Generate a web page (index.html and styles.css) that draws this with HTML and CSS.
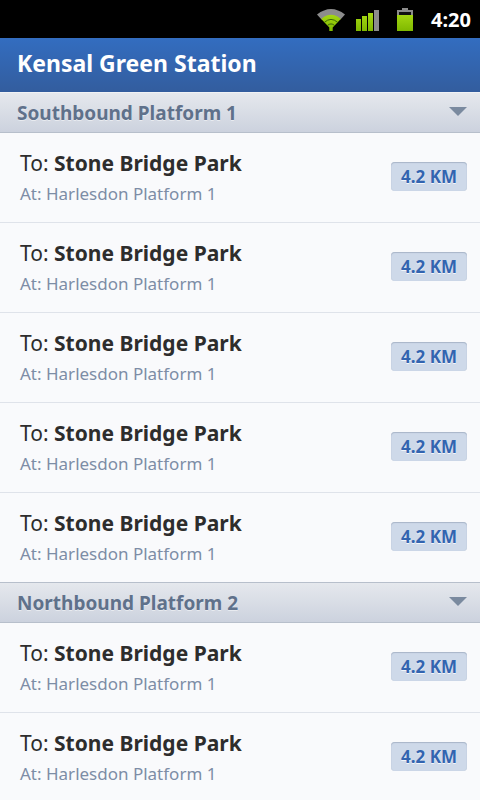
FILE: index.html
```html
<!DOCTYPE html>
<html lang="en">
<head>
<meta charset="utf-8">
<meta name="viewport" content="width=device-width, initial-scale=1">
<title>Kensal Green Station</title>
<link rel="stylesheet" href="styles.css">
</head>
<body>
<div class="status">
  <svg class="icon-wifi" width="30" height="24" viewBox="0 0 30 24" aria-hidden="true">
    <defs><linearGradient id="green" x1="0" y1="0" x2="0" y2="24" gradientUnits="userSpaceOnUse"><stop offset="0" stop-color="#b5e61a"/><stop offset="1" stop-color="#7fb800"/></linearGradient></defs>
    <path d="M1 7.500Q15-3.500 29 7.500L24.500 12.500Q15 4.500 5.500 12.500Z" fill="#8c8c8c"/>
    <path d="M5.200 12Q15 3.600 24.800 12L16.700 20.500V24H13.300V20.500Z" fill="url(#green)"/>
    <path d="M8.300 15.400Q15 9.400 21.700 15.400M11.300 18.600Q15 15.200 18.700 18.600" fill="none" stroke="#3c6408" stroke-width="1"/>
  </svg>
  <svg class="icon-signal" width="24" height="24" viewBox="0 0 24 24" aria-hidden="true">
    <path d="M0 12h5v12H0zM6 9h5v15H6zM12 6h5v18h-5z" fill="url(#green)"/>
    <path d="M18 3h5v21h-5z" fill="#8c8c8c"/>
  </svg>
  <svg class="icon-battery" width="16" height="24" viewBox="0 0 16 24" aria-hidden="true">
    <path d="M0 3h5V1h6v2h5v5H0z" fill="#8c8c8c"/>
    <path d="M2 5h12v3H2z" fill="#111"/>
    <path d="M0 8h16v16H0z" fill="url(#green)"/>
  </svg>
  <time class="clock">4:20</time>
</div>
<header class="title-bar"><h1>Kensal Green Station</h1></header>
<main class="board">
  <section>
    <h2><button class="platform" type="button">Southbound Platform 1<svg width="18" height="9" viewBox="0 0 18 9" aria-hidden="true"><path d="M0 0h18L9 9z" fill="#7a8a9f"/></svg></button></h2>
    <ul class="trains">
      <li><div><p class="to">To: <b>Stone Bridge Park</b></p><p class="at">At: Harlesdon Platform 1</p></div><span class="distance">4.2 KM</span></li>
      <li><div><p class="to">To: <b>Stone Bridge Park</b></p><p class="at">At: Harlesdon Platform 1</p></div><span class="distance">4.2 KM</span></li>
      <li><div><p class="to">To: <b>Stone Bridge Park</b></p><p class="at">At: Harlesdon Platform 1</p></div><span class="distance">4.2 KM</span></li>
      <li><div><p class="to">To: <b>Stone Bridge Park</b></p><p class="at">At: Harlesdon Platform 1</p></div><span class="distance">4.2 KM</span></li>
      <li><div><p class="to">To: <b>Stone Bridge Park</b></p><p class="at">At: Harlesdon Platform 1</p></div><span class="distance">4.2 KM</span></li>
    </ul>
  </section>
  <section>
    <h2><button class="platform" type="button">Northbound Platform 2<svg width="18" height="9" viewBox="0 0 18 9" aria-hidden="true"><path d="M0 0h18L9 9z" fill="#7a8a9f"/></svg></button></h2>
    <ul class="trains">
      <li><div><p class="to">To: <b>Stone Bridge Park</b></p><p class="at">At: Harlesdon Platform 1</p></div><span class="distance">4.2 KM</span></li>
      <li><div><p class="to">To: <b>Stone Bridge Park</b></p><p class="at">At: Harlesdon Platform 1</p></div><span class="distance">4.2 KM</span></li>
    </ul>
  </section>
</main>
</body>
</html>
```
FILE: styles.css
```css
* { box-sizing: border-box; }

body {
  margin: 0;
  height: 100vh;
  display: flex;
  flex-direction: column;
  background: #f9fafc;
  font-family: "Noto Sans", "Open Sans", sans-serif;
}

h1, h2, p, ul { margin: 0; padding: 0; }

.status {
  flex: none;
  display: flex;
  align-items: center;
  justify-content: flex-end;
  height: 38px;
  padding-right: 9px;
  background: #000;
}

.icon-wifi { margin-right: 10px; }
.icon-signal { margin-right: 17px; }
.icon-battery { margin-right: 18px; }
.icon-wifi, .icon-signal, .icon-battery { margin-bottom: 1px; }

.clock {
  color: #fff;
  font-size: 20px;
  font-weight: 700;
}

.title-bar {
  flex: none;
  display: flex;
  align-items: center;
  height: 54px;
  padding: 0 17px 4px;
  background: linear-gradient(#336dc0, #335d9e);
  color: #fff;
}

.title-bar h1 {
  font-size: 23px;
  line-height: 30px;
}

.board {
  flex: 1;
  min-height: 0;
  overflow-y: auto;
  scrollbar-width: none;
}

.platform {
  display: flex;
  align-items: center;
  justify-content: space-between;
  width: 100%;
  height: 41px;
  padding: 0 13px 0 17px;
  border: 0;
  border-top: 1px solid #f0f2f5;
  border-bottom: 1px solid #b7bfcb;
  background: linear-gradient(#e5e8ed, #ccd2de);
  color: #5f718b;
  font: 700 19px/28px "Noto Sans", "Open Sans", sans-serif;
  text-shadow: 0 1px 0 #e8ebf0;
}

.platform svg { margin-bottom: 3px; }

section + section .platform { border-top-color: #b7bfcb; }

.trains { list-style: none; }

.trains li {
  display: flex;
  align-items: center;
  justify-content: space-between;
  height: 90px;
  padding: 0 13px 2px 20px;
  border-bottom: 1px solid #dfe3ea;
}

.trains li:last-child {
  height: 89px;
  border-bottom: 0;
}

.to {
  padding-top: 3px;
  color: #2d2d2d;
  font-size: 21px;
  line-height: 32px;
}

.at {
  color: #7d8da6;
  font-size: 17px;
  line-height: 30px;
}

.distance {
  height: 29px;
  padding: 0 10px;
  border-radius: 4px;
  background: #ced9e9;
  box-shadow: inset 0 1px 1px #a9b5c8, inset 0 0 1px #b4c0d2;
  color: #3264b0;
  font-size: 17px;
  font-weight: 700;
  line-height: 29px;
  text-shadow: 0 1px 0 #f2f6fb;
}
```
